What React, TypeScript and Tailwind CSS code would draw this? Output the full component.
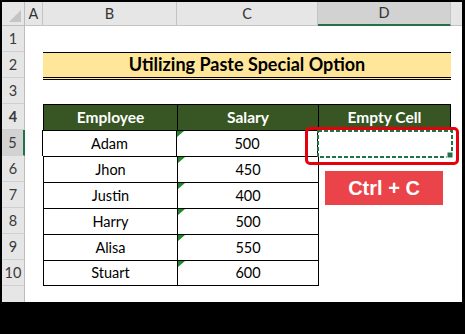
const sheetFont = { fontFamily: "Lato, 'Open Sans', sans-serif" };

const rows = [
  { name: 'Adam', salary: '500' },
  { name: 'Jhon', salary: '450' },
  { name: 'Justin', salary: '400' },
  { name: 'Harry', salary: '500' },
  { name: 'Alisa', salary: '550' },
  { name: 'Stuart', salary: '600' },
];

function RowHead({ n, active }: { n?: number; active?: boolean }) {
  return (
    <div
      className={
        'flex w-[23px] shrink-0 items-center justify-center border-b border-[#d0d0d0] text-[14.5px] text-[#3a3a3a] ' +
        (active ? 'border-r-2 border-r-[#217346] bg-[#d2d2d2]' : 'border-r border-r-[#bdbdbd] bg-[#e6e6e6]')
      }
    >
      {n}
    </div>
  );
}

function Corner() {
  return (
    <div className="relative w-[23px] shrink-0 border-b border-r border-[#bdbdbd] bg-[#e6e6e6]">
      <svg width="12" height="12" viewBox="0 0 12 12" className="absolute bottom-[3px] right-[3px]">
        <polygon points="12,0 12,12 0,12" fill="#c4c4c4" />
      </svg>
    </div>
  );
}

function TextMark() {
  return (
    <svg width="7" height="6" viewBox="0 0 7 6" className="absolute left-0 top-0">
      <polygon points="0,0 7,0 0,6" fill="#1f8a2a" />
    </svg>
  );
}

export default function App() {
  return (
    <div className="h-[334px] w-[465px] bg-black pl-[2px] pt-[2px]">
      <div className="relative h-[300px] w-[460px] overflow-hidden bg-white" style={sheetFont}>
        {/* column headers */}
        <div className="flex h-[24px] text-[14.5px] text-[#333]">
          <Corner />
          <div className="flex w-[18px] items-center justify-center border-b border-r border-[#c4c4c4] bg-[#e6e6e6]">A</div>
          <div className="flex w-[134px] items-center justify-center border-b border-r border-[#c4c4c4] bg-[#e6e6e6]">B</div>
          <div className="flex w-[141px] items-center justify-center border-b border-r border-[#c4c4c4] bg-[#e6e6e6]">C</div>
          <div className="flex w-[133px] items-center justify-center border-b-2 border-r border-b-[#217346] border-r-[#c4c4c4] bg-[#d2d2d2]">D</div>
          <div className="flex-1 border-b border-[#c4c4c4] bg-[#e6e6e6]" />
        </div>

        {/* row 1 */}
        <div className="flex h-[26px]">
          <RowHead n={1} />
        </div>

        {/* row 2: title */}
        <div className="flex h-[26px]">
          <RowHead n={2} />
          <div className="w-[18px]" />
          <div className="flex h-[28px] w-[408px] items-center justify-center border-t border-b-[3px] border-double border-black bg-[#ffe699] pb-px text-[18px] font-bold text-black">
            Utilizing Paste Special Option
          </div>
        </div>

        {/* row 3 */}
        <div className="flex h-[26px]">
          <RowHead n={3} />
        </div>

        {/* row 4: table header */}
        <div className="flex h-[26px] text-[15.5px] font-bold text-white">
          <RowHead n={4} />
          <div className="w-[18px]" />
          <div className="flex w-[134px] items-center justify-center border-l border-t border-black bg-[#375623]">Employee</div>
          <div className="flex w-[141px] items-center justify-center border-l border-t border-black bg-[#375623]">Salary</div>
          <div className="flex w-[133px] items-center justify-center border-l border-r border-t border-black bg-[#375623]">Empty Cell</div>
        </div>

        {/* data rows */}
        {rows.map((r, i) => {
          const last = i === rows.length - 1;
          return (
            <div key={r.name} className="flex h-[26px] text-[14.5px] text-black">
              <RowHead n={i + 5} active={i === 0} />
              <div className={i === 0 ? 'w-[17px]' : 'w-[18px]'} />
              <div className={'flex w-[134px] items-center justify-center border-l border-t border-black ' + (last ? 'border-b' : '')}>
                {r.name}
              </div>
              <div className={'relative flex w-[141px] items-center justify-center border-l border-t border-black ' + (last ? 'border-b' : '')}>
                <TextMark />
                {r.salary}
              </div>
              <div className="w-[133px] border-l border-black" />
            </div>
          );
        })}

        {/* row 11 (partial) */}
        <div className="flex h-[16px]">
          <div className="w-[23px] border-r border-[#bdbdbd] bg-[#e6e6e6]" />
        </div>

        {/* copied cell marquee */}
        <svg width="137" height="30" className="absolute left-[315px] top-[128px]">
          <rect x="1" y="1" width="134" height="26" fill="none" stroke="#217346" strokeWidth="2" strokeDasharray="4 2" />
          <rect x="130" y="22" width="6" height="6" fill="#217346" stroke="#fff" strokeWidth="1" />
        </svg>

        {/* red highlight */}
        <div className="absolute left-[303px] top-[125px] h-[38px] w-[154px] rounded-[5px] border-[3px] border-[#e5000c]" />

        {/* shortcut label */}
        <div
          className="absolute left-[323px] top-[169px] flex h-[34px] w-[118px] items-center justify-center bg-[#ea4349] text-[20px] font-bold text-white"
          style={{ fontFamily: "'Liberation Sans', Arial, sans-serif" }}
        >
          Ctrl + C
        </div>
      </div>
    </div>
  );
}
